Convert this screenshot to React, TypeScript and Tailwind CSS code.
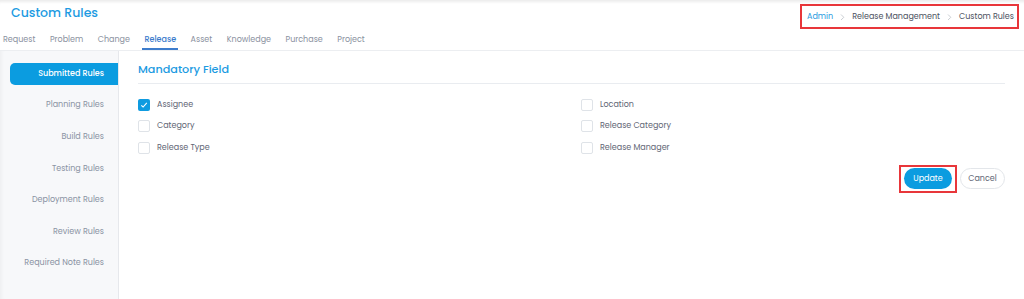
import React from "react";

const tabs = ["Request", "Problem", "Change", "Release", "Asset", "Knowledge", "Purchase", "Project"];
const side = ["Planning Rules", "Build Rules", "Testing Rules", "Deployment Rules", "Review Rules", "Required Note Rules"];

function Box({ checked }: { checked?: boolean }) {
  return checked ? (
    <span className="w-[12px] h-[12px] rounded-[2px] bg-[#0f9be0] flex items-center justify-center">
      <svg width="8" height="8" viewBox="0 0 8 8">
        <path d="M1.3 4.3 L3.1 6 L6.8 1.8" fill="none" stroke="white" strokeWidth="1.1" />
      </svg>
    </span>
  ) : (
    <span className="w-[12px] h-[12px] rounded-[2px] border border-[#dfe3e8] bg-white" />
  );
}

function Field({ label, checked }: { label: string; checked?: boolean }) {
  return (
    <div className="h-[21.5px] flex items-center gap-[7px]">
      <Box checked={checked} />
      <span className="text-[8px] text-[#5f6675]">{label}</span>
    </div>
  );
}

function Chevron() {
  return (
    <svg width="5" height="8" viewBox="0 0 5 8" className="mx-[7px] shrink-0">
      <path d="M1 1.5 L3.8 4.3 L1 7" fill="none" stroke="#c4c8ce" strokeWidth="0.9" />
    </svg>
  );
}

export default function App() {
  return (
    <div className="w-[1024px] h-[299px] bg-white overflow-hidden flex flex-col" style={{ fontFamily: "Poppins, 'Noto Sans', sans-serif" }}>
      <div className="h-[29px] flex justify-between items-start shadow-[inset_0_4px_3px_-2px_rgba(0,0,0,0.08)]">
        <div className="pl-[11px] pt-[5px] text-[12.5px] font-medium text-[#1d9be2] leading-[16px]">Custom Rules</div>
        <div className="mr-[5px] mt-[4px] h-[25px] w-[219px] border-2 border-[#e8363a] flex items-center pl-[5px] text-[8px] whitespace-nowrap">
          <span className="text-[#2a9be0]">Admin</span>
          <Chevron />
          <span className="text-[#4b5160]">Release Management</span>
          <Chevron />
          <span className="text-[#4b5160]">Custom Rules</span>
        </div>
      </div>
      <div className="h-[22px] flex items-stretch gap-[14.5px] pl-[3px] border-b border-[#eceef1] text-[8px] text-[#8a91a0]">
        {tabs.map((t) => (
          <div
            key={t}
            className={
              "flex items-center " +
              (t === "Release" ? "text-[#3d7ccc] font-medium border-b-2 border-[#3d7ccc] px-[2px] -mx-[2px] pt-[2px]" : "")
            }
          >
            {t}
          </div>
        ))}
      </div>
      <div className="flex flex-1">
        <div className="w-[119px] bg-[#f7f8fa] border-r border-[#e6e8ec] pt-[7px] pl-[10px] shadow-[inset_4px_0_4px_-3px_rgba(0,0,0,0.05)]">
          <div className="h-[31.6px] flex items-center">
            <div className="w-full h-[22px] bg-[#0b9ce0] rounded-l-[5px] flex items-center justify-end pr-[14px] text-[8px] text-white font-medium">
              Submitted Rules
            </div>
          </div>
          {side.map((s) => (
            <div key={s} className="h-[31.6px] flex items-center justify-end pr-[14px] text-[8px] text-[#8a93a3]">
              {s}
            </div>
          ))}
        </div>
        <div className="flex-1 pl-[19px] pr-[19px]">
          <div className="h-[33px] flex items-center pt-[4px] border-b border-[#e9ecf0] text-[11.2px] font-medium text-[#1d9be2]">Mandatory Field</div>
          <div className="grid grid-cols-[443px_1fr] pt-[10px]">
            <div className="flex flex-col">
              <Field label="Assignee" checked />
              <Field label="Category" />
              <Field label="Release Type" />
            </div>
            <div className="flex flex-col">
              <Field label="Location" />
              <Field label="Release Category" />
              <Field label="Release Manager" />
            </div>
          </div>
          <div className="flex justify-end items-center mt-[6px] gap-[3px]">
            <div className="h-[28px] w-[58px] border-2 border-[#e8363a] flex items-center justify-center">
              <div className="h-[21px] w-[48px] rounded-full bg-[#0b9ce0] text-white text-[8px] flex items-center justify-center">Update</div>
            </div>
            <div className="h-[21px] w-[45px] rounded-full border border-[#e3e6ea] text-[#5f6675] text-[8px] flex items-center justify-center">Cancel</div>
          </div>
        </div>
      </div>
    </div>
  );
}
